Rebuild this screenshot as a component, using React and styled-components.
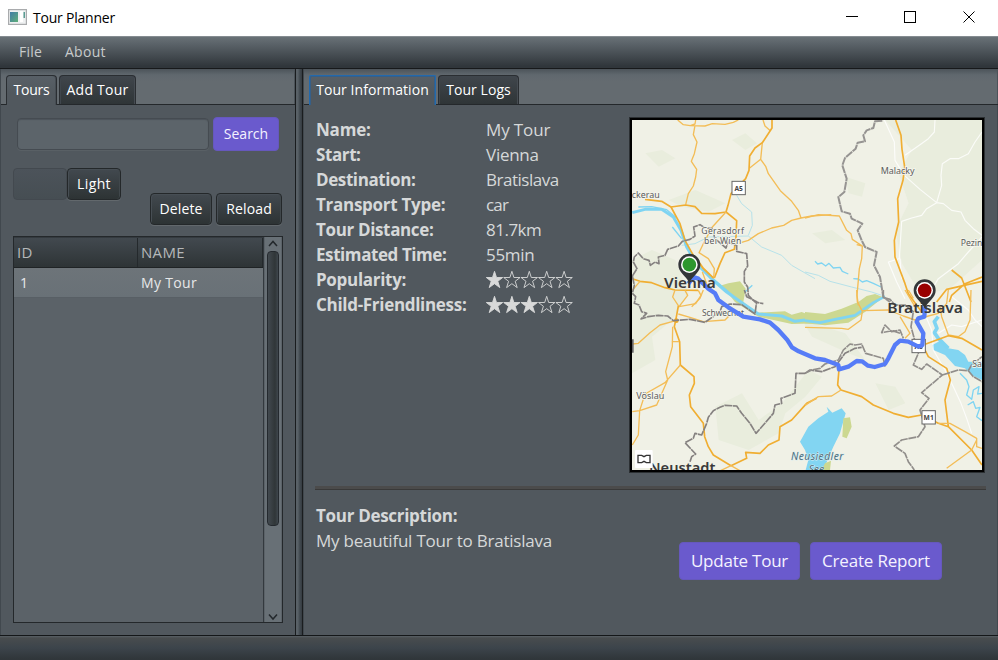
import React from 'react';
import styled, { createGlobalStyle, css } from 'styled-components';

const GlobalStyle = createGlobalStyle`
  * { box-sizing: border-box; }
  html, body, #root { height: 100%; }
  body {
    margin: 0;
    overflow: hidden;
    font-family: "Open Sans", "Noto Sans", sans-serif;
    font-size: 14px;
  }
`;

const Window = styled.div`
  display: flex;
  flex-direction: column;
  width: 998px;
  height: 660px;
  background: #51585e;
`;

const Text = styled.span`
  letter-spacing: ${(p) => p.$ls || 0}px;
  white-space: pre;
`;

const TitleBar = styled.header`
  display: flex;
  align-items: center;
  height: 36px;
  padding: 0 16px 2px 8px;
  background: #fff;
  color: #000;
`;

const AppIcon = styled.svg`
  width: 19px;
  height: 16px;
  margin-right: 6px;
`;

const WindowControls = styled.svg`
  width: 144px;
  height: 34px;
  margin-left: auto;
`;

const MenuBar = styled.nav`
  display: flex;
  gap: 23px;
  height: 33px;
  padding-left: 19px;
  line-height: 29px;
  color: #c8cbcc;
  background: linear-gradient(#697176 0, #5c646a 20%, #30363b 94%);
  border-top: 1px solid #858c91;
  border-bottom: 1px solid #17191b;
`;

const Workspace = styled.main`
  display: flex;
  height: 566px;
`;

const Pane = styled.section`
  display: flex;
  flex-direction: column;
  width: ${(p) => p.$width}px;
  border-left: 1px solid #41484e;
`;

const Divider = styled.div`
  width: 8px;
  border-left: 1px solid #191c1e;
  border-right: 1px solid #1a1d1f;
  background: linear-gradient(90deg, #596167, #596167 30%, #434b51 60%, #353b41);
`;

const TabStrip = styled.div`
  display: flex;
  gap: 2px;
  align-items: flex-end;
  height: 36px;
  padding-left: 5px;
  background: linear-gradient(#4c5359 0, #60686e 6px, #646b70 12px);
  border-bottom: 1px solid #24282b;
  box-shadow: inset -1px 0 #4c5359;
`;

const Tab = styled.div`
  width: ${(p) => p.$width}px;
  height: 29px;
  line-height: 27px;
  text-align: center;
  color: #fff;
  border: 1px solid #2a2e32;
  border-bottom: 0;
  border-radius: 4px 4px 0 0;
  background: linear-gradient(#40464c, #2f3537);
  box-shadow: inset 1px 1px #3f464c, inset -1px 0 #464c52;
  ${(p) => p.$active && css`
    height: 30px;
    margin-bottom: -1px;
    padding-bottom: 1px;
    background: linear-gradient(#586067, #51585e 60%);
    border-color: ${p.$focused ? '#2269ad' : '#2a2e32'};
    border-radius: ${p.$focused ? '2px 2px 0 0' : '4px 4px 0 0'};
    box-shadow: ${p.$focused ? 'inset 1px 1px #365f88, inset -1px 0 #365f88' : 'inset -1px 0 #464d53'};
  `}
`;

const ToursBody = styled.div`
  display: flex;
  flex-direction: column;
  padding: 12px 0 0 12px;
`;

const SearchRow = styled.div`
  display: flex;
  gap: 4px;
  align-items: center;
  padding-left: 4px;
  height: 34px;
`;

const SearchInput = styled.input`
  width: 192px;
  height: 32px;
  border: 1px solid #454b51;
  border-radius: 4px;
  outline: 0;
  background: #5c646a;
  box-shadow: inset 0 1px 1px #4c535a, 0 1px #596065;
`;

const AccentButton = styled.button`
  width: ${(p) => p.$width}px;
  height: ${(p) => (p.$large ? 38 : 34)}px;
  padding: 0 0 ${(p) => (p.$large ? 2 : 1)}px;
  border: 1px solid #6658bd;
  border-radius: 4px;
  color: #f4f2ff;
  font: ${(p) => (p.$large ? 17 : 14)}px "Open Sans", sans-serif;
  background: #6a5acd;
`;

const DarkButton = styled.button`
  width: ${(p) => p.$width}px;
  height: 32px;
  padding: 0 0 1px;
  border: 1px solid #24282a;
  border-radius: 4px;
  color: #fff;
  font: 14px "Open Sans", sans-serif;
  background: linear-gradient(#42494f, #2d3334);
  box-shadow: inset 1px 1px #474e54, inset -1px 0 #40474b, 0 1px #62686c;
`;

const ThemeToggle = styled.div`
  display: flex;
  height: 32px;
  margin-top: 17px;
`;

const TogglePlaceholder = styled.div`
  width: 54px;
  border: 1px solid #43494f;
  border-radius: 4px;
  background: linear-gradient(#4c535a, #464e53);
`;

const ActionRow = styled.div`
  display: flex;
  gap: 4px;
  justify-content: flex-end;
  width: 269px;
  margin-top: -7px;
`;

const TableFrame = styled.div`
  display: flex;
  width: 270px;
  height: 387px;
  margin-top: 11px;
  border: 1px solid #24282b;
  background: #5b6268;
`;

const Table = styled.div`
  width: 250px;
  border-right: 1px solid #33393e;
`;

const TableRow = styled.div`
  display: grid;
  grid-template-columns: 124px 125px;
  height: 30px;
  line-height: 29px;
  color: #e7e8e9;
  background: linear-gradient(#6d7479, #697177);
  border-bottom: 1px solid #585f65;
`;

const TableHead = styled(TableRow)`
  height: 31px;
  line-height: 29px;
  font-size: 15px;
  color: #b5b8ba;
  background: linear-gradient(#42494f, #2e3436);
  border-top: 1px solid #343a3f;
  border-bottom: 1px solid #1f2325;
`;

const Cell = styled.div`
  padding-left: ${(p) => p.$pad}px;
  border-right: ${(p) => (p.$head ? '1px solid #24292c' : '0')};
`;

const ScrollTrack = styled.div`
  display: flex;
  flex-direction: column;
  align-items: center;
  width: 16px;
  margin-left: 1px;
  background: #687076;
`;

const ScrollArrow = styled.svg`
  width: 12px;
  height: 14px;
  flex: none;
`;

const ScrollThumb = styled.div`
  width: 12px;
  height: 275px;
  margin-bottom: auto;
  border: 1px solid #24292e;
  border-radius: 4px;
  background: linear-gradient(90deg, #42494f, #303638 70%, #3e464c);
`;

const InfoBody = styled.div`
  display: flex;
  flex-direction: column;
  flex: 1;
  padding: 12px 12px 0 12px;
  color: #d6d8d9;
  font-size: 17px;
  border-right: 1px solid #42494f;
`;

const InfoTop = styled.div`
  display: flex;
  justify-content: space-between;
  height: 358px;
`;

const Facts = styled.dl`
  display: grid;
  grid-template-columns: 170px 120px;
  grid-auto-rows: 25px;
  align-content: start;
  margin: 0;
  line-height: 25px;
`;

const FactName = styled.dt`
  font-weight: 700;
`;

const FactValue = styled.dd`
  margin: 0;
`;

const StarRow = styled.svg`
  display: block;
  width: 90px;
  height: 25px;
`;

const MapFrame = styled.div`
  width: 356px;
  height: 356px;
  padding: 1px;
  background: #2b2f32;
`;

const MapCanvas = styled.svg`
  display: block;
  width: 354px;
  height: 354px;
  border: 2px solid #000;
  background: #f0f1e6;
  font-family: "Noto Sans", sans-serif;
`;

const Rule = styled.div`
  height: 4px;
  margin: 11px -1px 0 -1px;
  background: #4b4b4b;
  border-bottom: 1px solid #393939;
`;

const InfoBottom = styled.div`
  display: flex;
  justify-content: space-between;
  padding: 13px 43px 0 0;
  line-height: 25px;
`;

const Heading = styled.div`
  font-weight: 700;
`;

const ButtonGroup = styled.div`
  display: flex;
  gap: 10px;
  padding-top: 39px;
`;

const StatusBar = styled.footer`
  height: 25px;
  border-top: 1px solid #141719;
  background: linear-gradient(#596065 0, #484c4e 2px, #3c444b 50%, #30363a 95%);
`;

const STAR = 'M8.2 4.5 L10.2 10.7 H16.4 L11.5 14.5 L13.5 20.8 L8.2 16.9 L2.9 20.8 L4.9 14.5 L0 10.7 H6.2Z';

function Stars({ filled }) {
  return (
    <StarRow viewBox="0 0 90 25" aria-label={`${filled} of 5 stars`}>
      {[0, 1, 2, 3, 4].map((i) => (
        <path
          key={i}
          d={STAR}
          transform={`translate(${i * 17.4 + 0.3} -0.2)`}
          fill={i < filled ? '#d8d9d9' : 'none'}
          stroke="#d8d9d9"
          strokeWidth=".9"
        />
      ))}
    </StarRow>
  );
}

function Pin({ x, y, color }) {
  return (
    <g transform={`translate(${x} ${y})`}>
      <path d="M-33 0 A33 33 0 1 1 33 0 C33 24 12 30 0 54 C-12 30 -33 24 -33 0Z" fill="#333638" />
      <circle r="25" fill="#fff" />
      <circle r="20.5" fill={color} />
    </g>
  );
}

function Shield({ x, y, label }) {
  return (
    <g transform={`translate(${x} ${y})`}>
      <rect x="-20" y="-20" width="40" height="40" fill="#fff" stroke="#666" strokeWidth="3" />
      <text y="8" fontSize="20" fontWeight="700" fill="#444" textAnchor="middle">{label}</text>
    </g>
  );
}

function TourMap() {
  const road = { fill: 'none', stroke: '#f3bd57', strokeWidth: 4, strokeLinejoin: 'round' };
  const major = { ...road, stroke: '#f0ae32', strokeWidth: 5 };
  const minor = { fill: 'none', stroke: '#fff', strokeWidth: 3.5, strokeLinejoin: 'round', opacity: 0.8 };
  const water = { fill: 'none', stroke: '#7fd4f2', strokeLinejoin: 'round' };
  const border = { fill: 'none', stroke: '#858180', strokeWidth: 5, strokeDasharray: '24 2', strokeLinejoin: 'round' };
  const place = { fill: '#5c5c5c', fontSize: 26, lengthAdjust: 'spacingAndGlyphs', stroke: '#f4f5ed', strokeWidth: 5, paintOrder: 'stroke' };
  const city = { fill: '#3a3a3a', fontWeight: 600, fontSize: 42, lengthAdjust: 'spacingAndGlyphs' };
  return (
    <MapCanvas viewBox="0 0 1050 1050" preserveAspectRatio="none">
      <g fill="#e9eddd">
        <path d="M760 0 H1050 V420 L960 500 L870 530 L810 430 L790 330 L830 250 L800 160 L840 90Z" />
        <path d="M0 420 L60 390 L130 420 L170 520 L120 600 L60 650 L70 720 L0 760Z" />
        <path d="M250 860 L330 820 L380 900 L450 850 L530 750 L570 770 L520 830 L460 880 L440 940 L350 990 L260 960Z" />
        <path d="M110 240 L190 210 L280 250 L230 275 L150 260Z M510 600 L640 640 L700 720 L650 700 L540 650Z" />
        <path d="M40 100 L90 90 L130 115 L80 140Z M300 60 L340 40 L375 70 L340 90Z M540 340 L600 330 L640 360 L580 370Z M640 170 L700 190 L690 230 L650 220Z M730 790 L790 800 L820 850 L770 870Z" />
      </g>

      <g transform="translate(-21 -24)">
        <path d="M290 520 L310 514 L345 508 L362 530 L355 570 L395 602 L480 598 L500 608 L530 600 L570 615 L590 634 L500 636 L400 614 L330 570Z" fill="#ccd891" />
        <path d="M335 250 L350 275 L380 300 L382 340 L370 370 M170 400 L210 395 L250 375 L370 372 L410 405 L470 430 L500 460 L570 500" {...water} strokeWidth="3" stroke="#b7e2ea" />
        <path d="M22 302 L60 292 L110 292 L145 315 L168 355 L185 405 L215 455 L265 505 L305 540 L355 575 L400 606 L470 612 L510 628 L570 620" {...water} strokeWidth="9" />
        <path d="M40 285 L80 284 L125 293 L155 318 M142 345 L170 380 M360 540 L382 520 M235 475 L340 565" {...water} strokeWidth="4" />
      </g>
      <g transform="translate(519 -24)">
        <path d="M160 570 L185 552 L210 546 L235 556 L180 600 L130 632 L60 640 L0 634 V600 L60 606 L110 590Z" fill="#ccd891" />
        <path d="M30 448 L38 456 L50 453 L62 462 L72 454 L85 468 L105 466 L112 478 L130 486 M145 500 L160 501 L172 510 L185 506 L205 514 L228 525" {...water} strokeWidth="4" />
        <path d="M0 480 L40 490 L75 508 L140 525 L200 540 L230 550" {...water} strokeWidth="3" stroke="#b7e2ea" />
        <path d="M0 626 L45 632 L90 622 L150 610 L205 572 L240 553" {...water} strokeWidth="8" />
        <path {...minor} d="M238 24 L268 90 L270 145 L298 190 L345 232 L395 272 L415 275 L440 295 L468 300 L480 325 L505 350 L531 370 M390 24 L388 60 L370 80 L345 98 L300 130 M531 60 L510 90 L490 125 L460 140 L435 140 L412 155 L408 190 L410 220 L395 272 L365 290 L350 310 L320 318 L290 328 L283 440 L250 450 L275 510 L300 560 M531 375 L490 420 L460 455 L400 500 L370 550 M285 440 L290 500" />
      </g>
      <g transform="translate(519 510)">
        <path d="M2 540 L10 510 L0 480 L-15 455 L10 410 L40 385 L70 365 L65 350 L82 368 L110 355 L122 370 L105 430 L85 470 L70 505 L55 540Z" fill="#82d5f2" />
        <path d="M115 385 L135 382 L140 410 L125 445 L112 440Z M60 520 L78 512 L75 540 H50Z" fill="#ccd891" />
        <path d="M382 165 L410 150 L430 175 L460 180 L480 195 L490 215 L531 215 V270 L500 255 L480 235 L450 228 L420 195 L385 180Z" fill="#82d5f2" />
        <path d="M400 80 L388 95 L396 115 L388 128 L400 145 L430 175" {...water} strokeWidth="11" />
        <path d="M465 250 L485 270 L492 290 L485 315 L500 328 L505 300 L522 290 L518 312 L531 310 M488 345 L505 335 L512 355 L525 352 L515 380 L531 392" {...water} strokeWidth="4" />
        <path {...minor} d="M365 85 L380 120 L385 180 L420 240 L445 290 L468 340 L485 385 L500 430 M400 130 L440 105 L470 110 L531 90 M440 20 L490 60 L510 90 L531 110" />
      </g>

      <g transform="translate(-21 -24)">
        <path {...road} d="M158 24 L175 38 L196 41 L210 36 L212 24 M196 41 L240 42 L262 35 L300 37 L325 31 L340 24 M210 40 L205 68 L216 90 L208 125 L199 148 L215 172 L212 195 L205 222 L190 245 L182 278" />
        <path {...road} d="M414 24 L420 42 L436 56 M412 92 L407 142 L374 168 M407 142 L422 163 L430 185 L466 236 L500 268 L520 295 L528 318 L500 325 L476 340 L440 348 L400 365 L370 385 L350 391 M528 318 L560 312 L619 308" />
        <path {...major} d="M441 24 V48 L412 92 L390 108 L374 132 L372 175 L362 200 L318 245 L309 280 L303 300 M60 262 L110 268 L138 285 L182 279 L210 284 L230 304 L270 305 L303 300 L335 326 L333 375 L328 412 L300 422 L285 455 L268 498" />
        <path {...road} d="M303 300 L262 345 L240 385 L222 422 L250 440 L268 470 L266 498 L235 468 L215 440 M232 480 L245 515" />
        <path {...major} d="M138 285 L165 335 L180 385 L205 430 L235 470 L265 498 M22 500 L45 508 L80 512 L120 527 L150 534 L220 535" />
        <path {...road} d="M45 508 L22 535 M150 534 L143 555 L162 584 L188 550 L180 535 M220 535 L228 550 L212 575 L162 584" />
      </g>
      <g transform="translate(-21 510)">
        <path {...major} d="M160 48 L152 92 L148 110 L164 155 L166 225 L207 260 L208 280 L193 315 L197 350 L235 400 L239 440 L250 470 L265 495 L318 527 L365 505 L362 487 L405 490 L430 465 L462 450 L465 410 L500 390 L545 340 L575 325" />
        <path {...road} d="M22 162 L40 160 L75 128 L105 105 L152 92 M160 72 L195 82 L235 95 L300 90 L312 78 L270 70 M143 110 L142 170 L122 245 L128 270 L95 345 L44 362 L22 365 M166 225 L120 278 L60 312 L44 362 L40 435 L22 465 M140 155 H162 M200 50 L225 25 L235 0 M318 527 L350 545 M318 527 L280 545" />
        <circle cx="154" cy="92" r="7" fill="#f1aa24" />
      </g>
      <g transform="translate(519 -24)">
        <path {...major} d="M272 24 L288 70 L291 112 L299 165 L294 205 L278 260 L281 330 L268 385 L270 435 L300 515 L310 545 L350 600" />
        <path {...road} d="M0 318 L40 308 L103 312 L125 355 L138 365 L142 382 L172 402 L170 440 L163 470 L156 550 L160 580 M172 402 L155 398" />
        <path {...major} d="M395 570 L425 532 L531 508 M440 474 L470 498 L498 570 M433 570 L440 550 L480 515 L531 495" />
      </g>
      <g transform="translate(519 510)">
        <path {...road} d="M0 112 L110 115 L130 118 L168 90 L172 64 L157 35 L155 0 M172 62 L250 60 L295 78 L330 90 L370 78 L400 70 L425 40 L430 0 M285 80 L315 130 L300 145 M498 0 L495 90 L480 125 L460 140 L430 135 L410 80 L405 50" />
        <path {...major} d="M102 238 L98 285 L108 300 L170 320 L205 345 L265 370 L310 382 L350 375 L400 400 L430 410 L500 480 L531 525 M340 170 L430 137 L470 145 L531 180 M360 180 L370 200 L425 235 L436 270 L420 330 L430 410" />
        <path {...road} d="M108 300 L80 318 L40 320 L0 346 M400 400 L435 400 L480 425 L515 445 L515 470 L531 475 M515 450 L500 480 L425 535 M300 0 L330 50 M310 0 L325 25" />
      </g>

      <g transform="translate(-21 -24)">
        <path {...border} d="M22 492 L36 470 L25 450 L28 435 L40 423 L55 440 L72 445 L76 460 L90 450 L102 455 L100 435 L120 430 L128 412 L160 402 L172 388 L195 382 L210 372 L206 345 L225 338 L240 348 L262 350 L270 380 L303 408 L309 390 L335 400 L335 418 L365 425 L368 462 L358 478 L358 510 L368 525 L370 550 L390 570 L415 575" />
        <path {...border} d="M22 492 L28 520 L22 544" />
      </g>
      <g transform="translate(-21 510)">
        <path {...border} d="M22 10 L32 20 L28 40 L42 45 L50 65 L65 70 L48 87 L70 80 L100 76 L128 78 L145 92 L195 88 L240 97 L285 65 L290 50 L315 42 L350 44 L390 72 L395 35 L365 20 L358 0" />
        <path {...border} d="M195 515 L200 500 L212 492 L180 458 L205 445 L210 430 L230 435 L245 400 L250 382 L265 362 L285 352 L300 346 L335 348 L350 370 L375 400 L393 430 L415 405 L445 370 L450 345 L470 340 L468 325 L510 310 L513 250 L540 250 L555 240 L590 245 L630 230 L660 190 L690 175 L710 172" />
      </g>
      <g transform="translate(519 -24)">
        <path {...border} stroke="#969492" strokeWidth="6" d="M232 26 L210 28 L205 48 L185 55 L175 70 L180 88 L158 92 L152 110 L120 138 L112 160 L125 200 L118 240 L100 255 L110 298 L135 305 L140 320 L172 335 L158 355 L170 385 L180 405 L215 420 L207 460 L225 495 L235 555 L255 570" />
      </g>
      <g transform="translate(519 510)">
        <path {...border} stroke="#918e8b" d="M0 250 L20 240 L45 235 L60 222 L100 210 L115 180 L135 162 L150 165 L170 162 L182 190 L235 205 L240 230 M285 130 L262 122 L230 128 L240 105 L260 125 L285 120 L295 145 M235 0 V22 L255 28 L270 45 L300 45 L325 65 L318 110 L340 190 L325 225 L350 238 L365 222 L412 255 L350 308 L372 325 L345 360 L360 410 L340 440 L290 450 L268 468 L300 490 L310 515 L328 540 M412 255 L460 240 L490 242 L500 225 L531 200 M490 242 L505 260 L531 275" />
      </g>

      <g transform="translate(-21 -24)">
        <text {...place} x="20" y="258" textLength="84">ckerau</text>
        <text {...place} x="229" y="367">
          <tspan x="229" y="367" textLength="128">Gerasdorf</tspan>
          <tspan x="237" y="395" textLength="112">bei Wien</tspan>
        </text>
        <Shield x={341} y={228} label="A5" />
      </g>
      <g transform="translate(519 -24)">
        <text {...place} x="227" y="186" textLength="102">Malacky</text>
        <text {...place} x="467" y="401">Pezin</text>
      </g>
      <g transform="translate(-21 510)">
        <text {...place} x="231" y="77" textLength="126">Schwechat</text>
        <text {...place} x="34" y="326" textLength="84">Vöslau</text>
        <path d="M22 148 V188" stroke="#666" strokeWidth="8" />
        <text {...city} x="72" y="548" textLength="199">Neustadt</text>
        <rect x="30" y="480" width="53" height="54" rx="3" fill="#fff" />
        <path d="M39 496 H50 L57 500 L64 496 H75 V518 H64 L57 514 L50 518 H39Z" fill="none" stroke="#333" strokeWidth="4" />
      </g>
      <g transform="translate(519 510)">
        <Shield x={341} y={168} label="A6" />
        <Shield x={371} y={382} label="M1" />
        <text fontSize="31" fontStyle="italic" fill="#50707e" stroke="#d8eef2" strokeWidth="3" paintOrder="stroke">
          <tspan x="-42" y="509" textLength="157">Neusiedler</tspan>
          <tspan x="11" y="548">See</tspan>
        </text>
        <text {...place} x="502" y="232">Sa</text>
      </g>
      <path
        d="M169 491 L184 471 L199 476 L229 506 L249 520 L259 540 L289 562 L334 590 L384 598 L414 608 L439 630 L466 660 L480 682 L500 694 L519 702 L549 715 L579 720 L619 735 L621 748 L649 740 L674 723 L690 724 L708 737 L728 741 L759 732 L769 715 L789 675 L804 662 L829 665 L859 680 L871 675 L874 640 L854 605 L859 595 L877 590 L879 560"
        fill="none"
        stroke="#567cf7"
        strokeWidth="13"
        strokeLinejoin="round"
      />
      <text {...city} x="766" y="579" textLength="227">Bratislava</text>
      <text {...city} x="96" y="503" textLength="155">Vienna</text>
      <Pin x={172} y={434} color="#2e972e" />
      <Pin x={878} y={511} color="#990000" />
    </MapCanvas>
  );
}

const FACTS = [
  ['Name:', -0.21, 'My Tour', -0.12],
  ['Start:', -0.4, 'Vienna', -0.26],
  ['Destination:', -0.4, 'Bratislava', -0.48],
  ['Transport Type:', -0.28, 'car', -0.8],
  ['Tour Distance:', -0.35, '81.7km', -0.51],
  ['Estimated Time:', -0.42, '55min', -0.3],
  ['Popularity:', -0.3, 1],
  ['Child-Friendliness:', -0.3, 3],
];

export default function App() {
  return (
    <Window>
      <GlobalStyle />
      <TitleBar>
        <AppIcon viewBox="0 0 19 16">
          <defs>
            <linearGradient id="screen" x1="0" y1="0" x2="1" y2="1">
              <stop offset="0" stopColor="#3f7ba6" />
              <stop offset="1" stopColor="#5fae79" />
            </linearGradient>
          </defs>
          <rect x=".6" y=".6" width="17.8" height="14.8" fill="#eef0f1" stroke="#a9abad" strokeWidth="1.2" />
          <rect x="2" y="3" width="8" height="10" fill="url(#screen)" />
          <rect x="12" y="2" width="3" height="11" fill="#fff" />
          <rect x="15.5" y="3" width="1.5" height="6" fill="#5a9c93" />
        </AppIcon>
        <Text $ls={-0.22}>Tour Planner</Text>
        <WindowControls viewBox="0 0 144 34" fill="none" stroke="#000">
          <path d="M8 16.500 H20" />
          <rect x="66.500" y="11.500" width="11" height="11" />
          <path d="M125.500 11.500 L136.500 22.500 M136.500 11.500 L125.500 22.500" />
        </WindowControls>
      </TitleBar>
      <MenuBar>
        <Text $ls={0.2}>File</Text>
        <Text $ls={0.3}>About</Text>
      </MenuBar>
      <Workspace>
        <Pane $width={295}>
          <TabStrip>
            <Tab $width={51} $active><Text $ls={-0.2}>Tours</Text></Tab>
            <Tab $width={77}><Text $ls={0.24}>Add Tour</Text></Tab>
          </TabStrip>
          <ToursBody>
            <SearchRow>
              <SearchInput aria-label="Search tours" />
              <AccentButton $width={66}><Text>Search</Text></AccentButton>
            </SearchRow>
            <ThemeToggle>
              <TogglePlaceholder />
              <DarkButton $width={54}><Text $ls={0.4}>Light</Text></DarkButton>
            </ThemeToggle>
            <ActionRow>
              <DarkButton $width={62}><Text $ls={0.12}>Delete</Text></DarkButton>
              <DarkButton $width={66}><Text $ls={0.15}>Reload</Text></DarkButton>
            </ActionRow>
            <TableFrame>
              <Table>
                <TableHead>
                  <Cell $pad={3} $head><Text $ls={0.2}>ID</Text></Cell>
                  <Cell $pad={3} $head><Text $ls={0.3}>NAME</Text></Cell>
                </TableHead>
                <TableRow>
                  <Cell $pad={6}>1</Cell>
                  <Cell $pad={3}><Text $ls={0.34}>My Tour</Text></Cell>
                </TableRow>
              </Table>
              <ScrollTrack>
                <ScrollArrow viewBox="0 0 12 14" fill="none" stroke="#23282c" strokeWidth="1.5">
                  <path d="M2 9 L6 4.500 L10 9" />
                </ScrollArrow>
                <ScrollThumb />
                <ScrollArrow viewBox="0 0 12 14" fill="none" stroke="#23282c" strokeWidth="1.5">
                  <path d="M2 6.500 L6 11 L10 6.500" />
                </ScrollArrow>
              </ScrollTrack>
            </TableFrame>
          </ToursBody>
        </Pane>
        <Divider />
        <Pane $width={695}>
          <TabStrip>
            <Tab $width={127} $active $focused><Text $ls={0.06}>Tour Information</Text></Tab>
            <Tab $width={81}><Text $ls={0.07}>Tour Logs</Text></Tab>
          </TabStrip>
          <InfoBody>
            <InfoTop>
              <Facts>
                {FACTS.map(([name, nameSpacing, value, valueSpacing]) => (
                  <React.Fragment key={name}>
                    <FactName><Text $ls={nameSpacing}>{name}</Text></FactName>
                    <FactValue>
                      {typeof value === 'number'
                        ? <Stars filled={value} />
                        : <Text $ls={valueSpacing}>{value}</Text>}
                    </FactValue>
                  </React.Fragment>
                ))}
              </Facts>
              <MapFrame><TourMap /></MapFrame>
            </InfoTop>
            <Rule />
            <InfoBottom>
              <div>
                <Heading><Text $ls={-0.3}>Tour Description:</Text></Heading>
                <Text $ls={-0.22}>My beautiful Tour to Bratislava</Text>
              </div>
              <ButtonGroup>
                <AccentButton $large $width={121}><Text $ls={-0.22}>Update Tour</Text></AccentButton>
                <AccentButton $large $width={132}><Text $ls={-0.19}>Create Report</Text></AccentButton>
              </ButtonGroup>
            </InfoBottom>
          </InfoBody>
        </Pane>
      </Workspace>
      <StatusBar />
    </Window>
  );
}
